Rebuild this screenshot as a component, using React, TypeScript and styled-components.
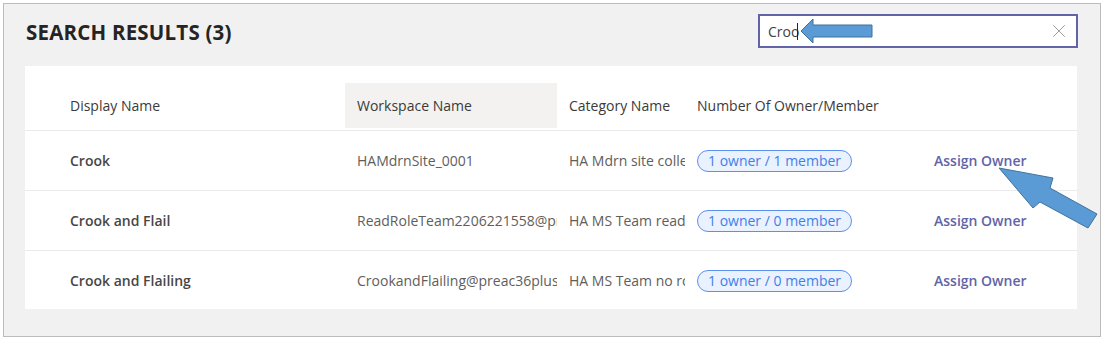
import styled, { createGlobalStyle } from "styled-components";
import { X } from "lucide-react";

const GlobalStyle = createGlobalStyle`
  body {
    margin: 0;
    background: #ffffff;
    font-family: "Segoe UI", "Open Sans", "Noto Sans", sans-serif;
  }
`;

interface IResult {
  displayName: string;
  workspace: string;
  category: string;
  owners: number;
  members: number;
}

const results: IResult[] = [
  { displayName: "Crook", workspace: "HAMdrnSite_0001", category: "HA Mdrn site collection", owners: 1, members: 1 },
  { displayName: "Crook and Flail", workspace: "ReadRoleTeam2206221558@preac36plus.onmicrosoft.com", category: "HA MS Team read role", owners: 1, members: 0 },
  { displayName: "Crook and Flailing", workspace: "CrookandFlailing@preac36plus.onmicrosoft.com", category: "HA MS Team no role", owners: 1, members: 0 },
];

const Page = styled.div`
  position: relative;
  padding: 3px;
`;

const Frame = styled.div`
  width: 1098px;
  height: 334px;
  box-sizing: border-box;
  border: 1px solid #bcbcbc;
  background: #f1f1f1;
  padding: 10px 23px 0 21px;
`;

const TopBar = styled.div`
  display: flex;
  align-items: center;
  justify-content: space-between;
  height: 33px;
  margin-bottom: 19px;
`;

const Title = styled.h2`
  margin: 3px 0 0 1px;
  font-size: 20.5px;
  font-weight: 700;
  color: #252423;
  letter-spacing: 0.2px;
`;

const SearchBox = styled.div`
  display: flex;
  align-items: center;
  width: 320px;
  height: 34px;
  box-sizing: border-box;
  margin-right: -1px;
  margin-top: 1px;
  border: 2px solid #6264a7;
  background: #ffffff;
  padding: 0 6px 0 8px;
`;

const SearchText = styled.span`
  flex: 1;
  font-size: 14px;
  color: #424242;
`;

const Caret = styled.span`
  display: inline-block;
  width: 1px;
  height: 17px;
  margin-left: -2px;
  vertical-align: -3px;
  background: #252423;
`;

const Panel = styled.div`
  background: #ffffff;
  height: 243px;
`;

const Grid = styled.div<{ $header?: boolean; $last?: boolean }>`
  display: grid;
  grid-template-columns: 320px 212px 128px 237px 1fr;
  align-items: ${(p) => (p.$header ? "end" : "center")};
  height: ${(p) => (p.$header ? "64px" : "59px")};
  border-bottom: ${(p) => (p.$last ? "none" : "1px solid #ecebea")};
`;

const HeadCell = styled.div<{ $active?: boolean }>`
  height: 45px;
  margin-bottom: 2px;
  display: flex;
  align-items: center;
  padding-left: 12px;
  font-size: 14px;
  color: #3b3a39;
  background: ${(p) => (p.$active ? "#f3f2f1" : "transparent")};
  white-space: nowrap;
  &:first-child {
    padding-left: 45px;
  }
`;

const Cell = styled.div<{ $bold?: boolean }>`
  padding-left: 12px;
  overflow: hidden;
  white-space: nowrap;
  font-size: 14px;
  font-weight: ${(p) => (p.$bold ? 600 : 400)};
  color: ${(p) => (p.$bold ? "#484644" : "#605e5c")};
  &:first-child {
    padding-left: 45px;
  }
`;

const Pill = styled.span`
  display: inline-block;
  box-sizing: border-box;
  height: 22px;
  line-height: 19px;
  padding: 0 10px;
  border: 1px solid #5b8ff0;
  border-radius: 11px;
  background: #eaf2ff;
  color: #3f7fe8;
  font-size: 14px;
`;

const AssignLink = styled.a`
  font-size: 14px;
  font-weight: 600;
  color: #6264a7;
  text-decoration: none;
  cursor: pointer;
`;

const Overlay = styled.svg`
  position: absolute;
  left: 0;
  top: 0;
  pointer-events: none;
`;

export default function App() {
  return (
    <Page>
      <GlobalStyle />
      <Frame>
        <TopBar>
          <Title>SEARCH RESULTS (3)</Title>
          <SearchBox>
            <SearchText>
              Croo
              <Caret />
            </SearchText>
            <X size={22} strokeWidth={0.9} color="#8a8886" />
          </SearchBox>
        </TopBar>
        <Panel>
          <Grid $header>
            <HeadCell>Display Name</HeadCell>
            <HeadCell $active>Workspace Name</HeadCell>
            <HeadCell>Category Name</HeadCell>
            <HeadCell>Number Of Owner/Member</HeadCell>
            <HeadCell />
          </Grid>
          {results.map((r, i) => (
            <Grid key={r.displayName} $last={i === results.length - 1}>
              <Cell $bold>{r.displayName}</Cell>
              <Cell>{r.workspace}</Cell>
              <Cell>{r.category}</Cell>
              <Cell>
                <Pill>
                  {r.owners} owner / {r.members} member
                </Pill>
              </Cell>
              <Cell>
                <AssignLink>Assign Owner</AssignLink>
              </Cell>
            </Grid>
          ))}
        </Panel>
      </Frame>
      <Overlay width="1107" height="343">
        <polygon
          points="801,31 813,19 813,25 872,25 872,37 813,37 813,43"
          fill="#5b9bd5"
          stroke="#41719c"
          strokeWidth="1"
        />
        <polygon
          points="999,168 1053,178 1050,188 1097,214 1088,228 1040,202 1033,208"
          fill="#5b9bd5"
          stroke="#41719c"
          strokeWidth="1"
        />
      </Overlay>
    </Page>
  );
}
